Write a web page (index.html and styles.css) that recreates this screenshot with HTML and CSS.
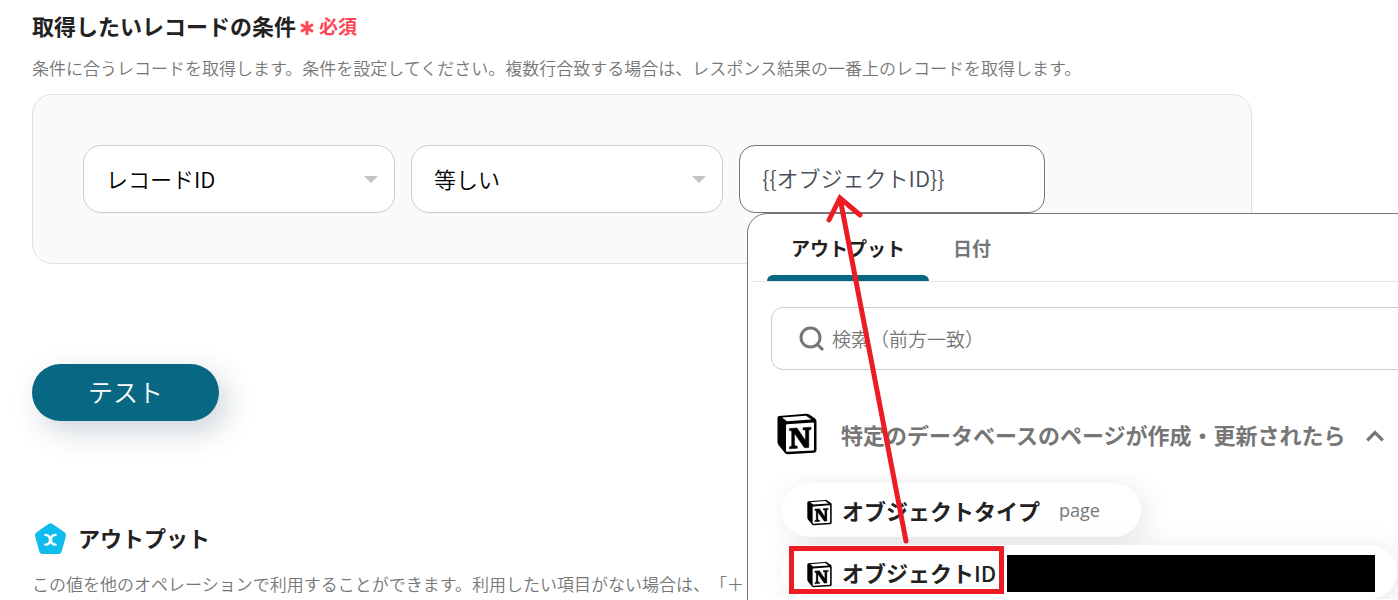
FILE: index.html
```html
<!DOCTYPE html>
<html lang="ja">
<head>
    <meta charset="UTF-8">
    <meta name="viewport" content="width=device-width, initial-scale=1.0">
    <title>レコードの条件</title>
    <link rel="stylesheet" href="styles.css">
</head>
<body>
    <svg class="symbols" aria-hidden="true">
        <symbol id="notion" viewBox="0 0 40 42">
            <path d="M2 3 L29 .800 Q31 .600 33 2 L38 5.500 Q39.500 6.600 39.500 8.500 V37 Q39.500 39.500 37 39.700 L11 41.300 Q9 41.400 7.700 39.800 L1.500 32 Q.500 30.700 .500 29 V5 Q.500 3.200 2 3Z" fill="#000"/>
            <path d="M5 4.500 L29 2.700 L34.500 6.500 L10 8.300Z M10 11.200 L36 9.500 Q37 9.500 37 10.500 V36 Q37 37.300 36 37.400 L10.300 38.800 Q9 38.800 9 37.500 V12.300 Q9 11.300 10 11.200Z" fill="#fff"/>
            <path d="M12.500 15.500 L20 15 L28.500 27.500 V17.300 L26 16.800 V14.700 L34 14.200 V16.300 L31.800 17 V34.500 L27.500 34.800 L17.500 20.500 V32.500 L20.300 33.200 V35.300 L12.500 35.800 V33.700 L14.700 32.900 V18 L12.500 17.600Z" fill="#000" stroke="#000" stroke-width=".5"/>
        </symbol>
    </svg>

    <main class="page">
        <section class="condition">
            <h2 class="title">取得したいレコードの条件
                <span class="required"><svg class="asterisk" viewBox="0 0 14 16" aria-hidden="true"><path d="M7 1V15M1 4.500L13 11.500M13 4.500L1 11.500"/></svg>必須</span>
            </h2>
            <p class="description">条件に合うレコードを取得します。条件を設定してください。複数行合致する場合は、レスポンス結果の一番上のレコードを取得します。</p>

            <div class="card">
                <select class="select" aria-label="項目">
                    <option>レコードID</option>
                </select>
                <select class="select" aria-label="比較">
                    <option>等しい</option>
                </select>
                <div class="field">
                    <input class="value" type="text" aria-label="値" value="{{オブジェクトID}}">

                    <div class="panel">
                        <div class="tabs" role="tablist">
                            <button class="tab active" role="tab" aria-selected="true">アウトプット</button>
                            <button class="tab" role="tab" aria-selected="false">日付</button>
                        </div>
                        <label class="search">
                            <svg class="search-icon" viewBox="0 0 26 26" aria-hidden="true"><circle cx="11.500" cy="11.500" r="9.500"/><path d="M18 18L24 24"/></svg>
                            <input class="search-input" type="text" placeholder="検索（前方一致）" aria-label="検索">
                        </label>
                        <button class="group">
                            <svg class="group-icon" aria-hidden="true"><use href="#notion"/></svg>
                            <span>特定のデータベースのページが作成・更新されたら</span>
                            <svg class="chevron" viewBox="0 0 18 12" aria-hidden="true"><path d="M2 10L9 3L16 10"/></svg>
                        </button>
                        <div class="items">
                            <button class="pill">
                                <svg class="pill-icon" aria-hidden="true"><use href="#notion"/></svg>
                                <span class="pill-name">オブジェクトタイプ</span>
                                <span class="pill-value">page</span>
                            </button>
                            <button class="pill">
                                <svg class="pill-icon" aria-hidden="true"><use href="#notion"/></svg>
                                <span class="pill-name">オブジェクト<span class="latin">ID</span></span>
                                <span class="masked"></span>
                                <span class="highlight"></span>
                            </button>
                        </div>
                        <svg class="arrow" viewBox="0 0 90 360" aria-hidden="true"><path d="M80 349L14 6M3 28L14 6L34 23"/></svg>
                    </div>
                </div>
            </div>
        </section>

        <button class="test">テスト</button>

        <section class="output">
            <h2 class="title output-title">
                <svg class="output-icon" viewBox="0 0 30 30" aria-hidden="true">
                    <path d="M13 1Q15-.500 17 1L28.500 9Q30.500 10.500 29.800 13L26 27Q25.200 30 22.500 30H7.500Q4.800 30 4 27L.200 13Q-.500 10.500 1.500 9Z" fill="#10bbee"/>
                    <path d="M10 11.500C13.500 11.500 14.500 13.500 14.500 16.500C14.500 19.500 13 21 10 21M20 11.500C17 11.500 15.500 13.500 15.500 16.500C15.500 19.500 17 21 20 21" fill="none" stroke="#fff" stroke-width="2.200" stroke-linecap="round"/>
                </svg>
                アウトプット
            </h2>
            <p class="description">この値を他のオペレーションで利用することができます。利用したい項目がない場合は、「＋</p>
        </section>
    </main>
</body>
</html>
```
FILE: styles.css
```css
* {
    box-sizing: border-box;
}
body {
    margin: 0;
    height: 100vh;
    overflow: hidden;
    background-color: #fff;
    color: #222;
    font-family: "Noto Sans CJK JP", sans-serif;
    text-spacing-trim: space-all;
}
button,
input,
select {
    font-family: inherit;
}
button {
    border: none;
    background: none;
    padding: 0;
    cursor: pointer;
}
.symbols {
    position: absolute;
    width: 0;
    height: 0;
}
.page {
    padding: 8px 32px 0;
}
.title {
    display: flex;
    align-items: center;
    gap: 4px;
    margin: 0;
    font-size: 22px;
    line-height: 32px;
}
.required {
    display: flex;
    align-items: center;
    gap: 5px;
    padding-top: 2px;
    color: #ff4757;
    font-size: 19px;
}
.asterisk {
    width: 14px;
    height: 16px;
    margin-top: 4px;
    fill: none;
    stroke: #ff4757;
    stroke-width: 3;
}
.description {
    margin: 0;
    color: #767676;
    font-size: 17px;
    font-weight: 350;
    line-height: 24px;
    white-space: nowrap;
}
.condition .description {
    margin: 14px 0;
}

/* Condition row */
.card {
    display: flex;
    gap: 16px;
    max-width: 1220px;
    padding: 50px;
    border: 1px solid #e0e0e6;
    border-radius: 20px;
    background-color: #fafafa;
}
.select {
    flex: 0 1 312px;
    height: 68px;
    padding: 0 22px 2px;
    border: 1px solid #ccc;
    border-radius: 18px;
    appearance: none;
    background: #fff url("data:image/svg+xml,%3Csvg xmlns='http://www.w3.org/2000/svg' width='14' height='7'%3E%3Cpath d='M0 0H14L7 7Z' fill='%23c4c4c4'/%3E%3C/svg%3E") no-repeat right 16px center;
    color: #000;
    font-size: 22px;
    font-weight: 350;
}
.field {
    position: relative;
    flex: 0 1 306px;
}
.value {
    width: 100%;
    height: 68px;
    padding: 0 22px 4px;
    border: 1px solid #767676;
    border-radius: 16px;
    background-color: #fff;
    color: #495057;
    font-size: 22px;
    font-weight: 350;
}

/* Value picker opened under the field */
.panel {
    position: absolute;
    top: 100%;
    left: 8px;
    width: 720px;
    height: 480px;
    padding-left: 5px;
    border: 1px solid #767676;
    border-radius: 20px;
    background-color: #fff;
}
.tabs {
    display: flex;
    padding-left: 14px;
    border-bottom: 1px solid #e5e5e5;
}
.tab {
    position: relative;
    height: 67px;
    padding: 0 24px;
    color: #767676;
    font-size: 19px;
    font-weight: bold;
}
.tab.active {
    color: #222;
}
.tab.active::after {
    content: "";
    position: absolute;
    left: 0;
    right: 0;
    bottom: 0;
    height: 6px;
    border-radius: 6px 6px 0 0;
    background-color: #086883;
}
.search {
    display: flex;
    align-items: center;
    gap: 7px;
    height: 63px;
    margin: 25px 20px 0 18px;
    padding-left: 27px;
    border: 1px solid #ccc;
    border-radius: 12px;
}
.search-icon {
    width: 26px;
    height: 26px;
    fill: none;
    stroke: #767676;
    stroke-width: 3;
}
.search-input {
    flex: 1;
    padding: 0;
    border: none;
    font-size: 19px;
    font-weight: 350;
}
.search-input::placeholder {
    color: #767676;
}
.group {
    display: flex;
    align-items: center;
    height: 42px;
    margin: 43px 0 0 24px;
    color: #767676;
    font-size: 22px;
    font-weight: bold;
}
.group-icon {
    width: 40px;
    height: 42px;
    margin-right: 24px;
}
.chevron {
    width: 20px;
    height: 14px;
    margin: 4px 0 0 20px;
    fill: none;
    stroke: #767676;
    stroke-width: 3;
}
.items {
    display: flex;
    flex-direction: column;
    align-items: flex-start;
    gap: 8px;
    margin-top: 18px;
    padding: 10px 0 0 29px;
    overflow: hidden;
}
.pill {
    position: relative;
    display: flex;
    align-items: center;
    height: 54px;
    padding: 0 41px 0 25px;
    border-radius: 27px;
    background-color: #fff;
    box-shadow: 5px 5px 30px rgba(0, 0, 0, 0.1);
    color: #222;
    font-size: 22px;
    font-weight: bold;
    white-space: nowrap;
}
.pill:last-child {
    padding-right: 22px;
}
.pill-icon {
    width: 25px;
    height: 27px;
    margin: 4px 10px 0 0;
}
.latin {
    font-weight: 500;
}
.pill-value {
    margin-left: 19px;
    color: #767676;
    font-family: "Open Sans", sans-serif;
    font-size: 18px;
    font-weight: 400;
}
.masked {
    width: 368px;
    height: 37px;
    margin: 2px 0 0 11px;
    background-color: #000;
}

/* Red annotations */
.highlight {
    position: absolute;
    top: 1px;
    left: 7px;
    width: 215px;
    height: 48px;
    border: 5px solid #ed1c24;
}
.arrow {
    position: absolute;
    top: -22px;
    left: 78px;
    width: 90px;
    height: 360px;
    fill: none;
    stroke: #ed1c24;
    stroke-width: 5;
    stroke-linecap: round;
    pointer-events: none;
}

.test {
    height: 57px;
    margin-top: 100px;
    padding: 0 56px 4px;
    border-radius: 29px;
    background-color: #086883;
    box-shadow: 8px 10px 30px rgba(10, 40, 60, 0.2);
    color: #fff;
    font-size: 25px;
    font-weight: 350;
}
.output {
    margin-top: 98px;
}
.output-title {
    gap: 12px;
    padding-left: 3px;
}
.output-icon {
    width: 31px;
    height: 31px;
    margin-top: 4px;
}
.output .description {
    margin-top: 18px;
}
```
